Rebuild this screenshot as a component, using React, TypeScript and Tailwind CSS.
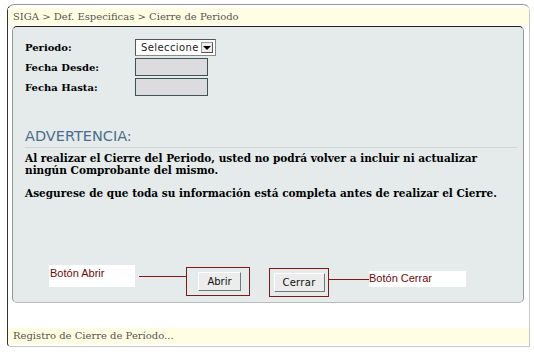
export default function App() {
  const serif = { fontFamily: '"DejaVu Serif", serif' }
  return (
    <div className="w-[534px] h-[353px] bg-white pt-[4px] pl-[7px]">
      <div className="w-[523px] h-[343px] flex flex-col border border-[#c8c8c8] border-l-[#333] border-t-[#999] rounded-tl-[7px] rounded-tr-[7px] rounded-bl-[4px]">
        {/* breadcrumb */}
        <div
          className="mt-[3px] h-[17px] bg-[#fffde2] px-[5px] text-[10px] leading-[17px] text-[#555]"
          style={serif}
        >
          SIGA &gt; Def. Especificas &gt; Cierre de Periodo
        </div>

        {/* main panel */}
        <div className="ml-[4px] mt-[1px] w-[512px] h-[277px] flex flex-col bg-[#e4ebea] border border-[#999] border-t-[#222] border-b-[#bbb] rounded-[5px] pl-[12px] pr-[6px] pt-[12px]">
          <div className="flex flex-col gap-[2px] text-[10px] font-bold text-black" style={serif}>
            <div className="flex items-center h-[17px]">
              <span className="w-[110px]">Periodo:</span>
              <div
                className="w-[81px] h-[17px] flex items-center justify-between bg-white border border-[#888] border-t-[#555] border-l-[#555] pl-[5px] pr-[2px] font-normal text-[10px] tracking-[0.4px] text-[#222]"
                style={{ fontFamily: '"DejaVu Sans", sans-serif' }}
              >
                <span>Seleccione</span>
                <span className="w-[12px] h-[11px] flex items-center justify-center border border-[#999] border-r-[#555] border-b-[#555] bg-[#eee]">
                  <span className="w-0 h-0 border-l-[4px] border-r-[4px] border-t-[4px] border-l-transparent border-r-transparent border-t-black" />
                </span>
              </div>
            </div>
            <div className="flex items-center h-[18px]">
              <span className="w-[110px]">Fecha Desde:</span>
              <div className="w-[73px] h-[18px] bg-[#dcdcde] border border-[#3d5450]" />
            </div>
            <div className="flex items-center h-[18px]">
              <span className="w-[110px]">Fecha Hasta:</span>
              <div className="w-[73px] h-[18px] bg-[#dcdcde] border border-[#3d5450]" />
            </div>
          </div>

          <div
            className="mt-[32px] text-[14.5px] leading-[17px] text-[#4d6d8d] border-b border-[#cfd6d6] pb-[2px]"
            style={{ fontFamily: '"DejaVu Sans", sans-serif' }}
          >
            ADVERTENCIA:
          </div>
          <div className="mt-[4px] text-[10.5px] leading-[12px] font-bold text-black" style={serif}>
            <p>
              Al realizar el Cierre del Periodo, usted no podrá volver a incluir ni actualizar
              <br />
              ningún Comprobante del mismo.
            </p>
            <p className="mt-[11px]">
              Asegurese de que toda su información está completa antes de realizar el Cierre.
            </p>
          </div>

          {/* buttons with annotations */}
          <div className="mt-auto mb-[5px] flex items-start" style={{ fontFamily: '"Liberation Sans", Arial, sans-serif' }}>
            <div className="ml-[24px] mt-[-2px] w-[86px] h-[22px] bg-white text-[11px] text-[#6b0a0a] pl-[1px] leading-[16px]">
              Botón Abrir
            </div>
            <div className="ml-[4px] mt-[9px] w-[47px] h-px bg-[#7a1a1a]" />
            <div className="w-[64px] h-[29px] border border-[#7a1a1a] flex items-center justify-center">
              <button
                className="w-[43px] h-[19px] bg-[#ececec] border border-[#fff] border-r-[#777] border-b-[#777] text-[10px] text-[#111] ml-[3px]"
                style={{ fontFamily: '"DejaVu Sans", sans-serif' }}
              >
                Abrir
              </button>
            </div>
            <div className="ml-[19px] mt-[1px] w-[60px] h-[29px] border border-[#7a1a1a] flex items-center justify-center">
              <button
                className="w-[51px] h-[19px] bg-[#ececec] border border-[#fff] border-r-[#777] border-b-[#777] text-[10px] text-[#111] tracking-[0.3px]"
                style={{ fontFamily: '"DejaVu Sans", sans-serif' }}
              >
                Cerrar
              </button>
            </div>
            <div className="mt-[12px] w-[40px] h-px bg-[#7a1a1a]" />
            <div className="mt-[4px] w-[97px] h-[16px] bg-white text-[11px] text-[#6b0a0a] leading-[14px]">
              Botón Cerrar
            </div>
          </div>
        </div>

        {/* status bar */}
        <div
          className="mt-[25px] h-[16px] bg-[#fffde2] px-[5px] text-[10px] leading-[16px] text-[#555]"
          style={serif}
        >
          Registro de Cierre de Período...
        </div>
      </div>
    </div>
  )
}
